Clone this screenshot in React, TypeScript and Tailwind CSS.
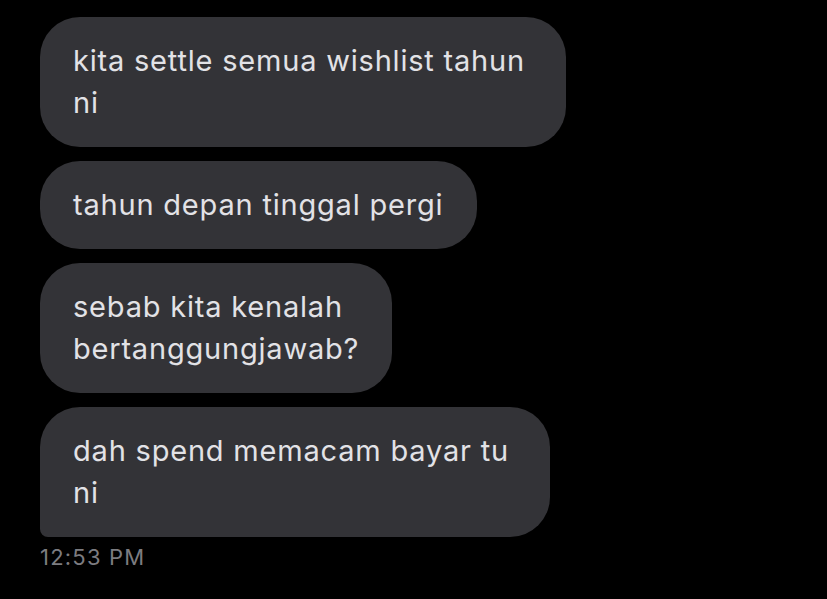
const messages = [
  { lines: ['kita settle semua wishlist tahun', 'ni'], width: 'w-[526px]', corner: 'rounded-[40px]' },
  { lines: ['tahun depan tinggal pergi'], width: 'w-[437px]', corner: 'rounded-[40px]' },
  { lines: ['sebab kita kenalah', 'bertanggungjawab?'], width: 'w-[352px]', corner: 'rounded-[40px]' },
  { lines: ['dah spend memacam bayar tu', 'ni'], width: 'w-[510px]', corner: 'rounded-[40px] rounded-bl-[8px]' },
];

export default function App() {
  return (
    <div
      className="w-[827px] h-[599px] bg-black overflow-hidden pt-[17px] pl-[40px]"
      style={{ fontFamily: 'Inter, "Noto Sans", sans-serif' }}
    >
      <div className="flex flex-col gap-[14px]">
        {messages.map((m, i) => (
          <div
            key={i}
            className={`${m.width} ${m.corner} bg-[#333337] text-[#e2e2e6] text-[29px] leading-[42px] tracking-[0.8px] px-[33px] py-[23px] whitespace-nowrap`}
          >
            {m.lines.map((l, j) => (
              <div key={j}>{l}</div>
            ))}
          </div>
        ))}
      </div>
      <div className="mt-[6px] text-[22px] leading-[28px] tracking-[1.2px] text-[#7c7c80]">12:53 PM</div>
    </div>
  );
}
